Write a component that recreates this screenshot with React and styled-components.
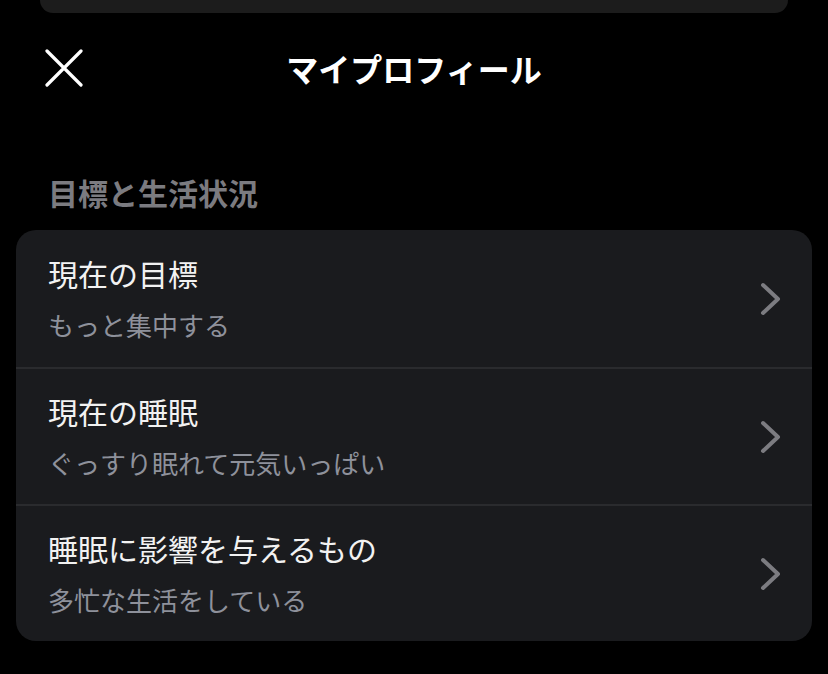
import React from 'react';
import styled, { createGlobalStyle } from 'styled-components';

const GlobalStyle = createGlobalStyle`
  html, body {
    margin: 0;
    padding: 0;
    background: #000;
  }
  body {
    font-family: "Noto Sans CJK JP", "Noto Sans", sans-serif;
    -webkit-font-smoothing: antialiased;
  }
`;

const items = [
    { title: '現在の目標', value: 'もっと集中する' },
    { title: '現在の睡眠', value: 'ぐっすり眠れて元気いっぱい' },
    { title: '睡眠に影響を与えるもの', value: '多忙な生活をしている' },
];

export default function App() {
    return (
        <Page>
            <GlobalStyle />
            <SheetPeek />
            <Header>
                <CloseButton aria-label="閉じる">
                    <svg width="38" height="38" viewBox="0 0 38 38" fill="none">
                        <path d="M2 2 L36 36 M36 2 L2 36" stroke="#fff" strokeWidth="3.2" strokeLinecap="round" />
                    </svg>
                </CloseButton>
                <Title>マイプロフィール</Title>
            </Header>
            <SectionLabel>目標と生活状況</SectionLabel>
            <Card>
                {items.map((item) => (
                    <Row key={item.title}>
                        <RowText>
                            <RowTitle>{item.title}</RowTitle>
                            <RowValue>{item.value}</RowValue>
                        </RowText>
                        <svg width="22" height="34" viewBox="0 0 22 34" fill="none">
                            <path d="M3 3 L18 17 L3 31" stroke="#7c7c81" strokeWidth="4" strokeLinecap="round" strokeLinejoin="round" />
                        </svg>
                    </Row>
                ))}
            </Card>
        </Page>
    );
}

const Page = styled.div`
  width: 828px;
  height: 674px;
  background: #000;
  overflow: hidden;
  display: flex;
  flex-direction: column;
`;

const SheetPeek = styled.div`
  height: 13px;
  margin: 0 40px;
  background: #1c1c1c;
  border-radius: 0 0 14px 14px;
`;

const Header = styled.div`
  position: relative;
  height: 112px;
  display: flex;
  align-items: center;
  justify-content: center;
`;

const CloseButton = styled.button`
  position: absolute;
  left: 45px;
  top: 36px;
  padding: 0;
  border: 0;
  background: none;
  display: flex;
  cursor: pointer;
`;

const Title = styled.h1`
  margin: 0;
  margin-top: -3px;
  color: #fff;
  font-size: 32px;
  font-weight: 700;
  letter-spacing: 0;
`;

const SectionLabel = styled.h2`
  margin: 47px 0 0 48px;
  color: #7b7b80;
  font-size: 30px;
  font-weight: 700;
  line-height: 40px;
`;

const Card = styled.div`
  margin: 18px 16px 0;
  background: #1a1b1e;
  border-radius: 20px;
  overflow: hidden;
`;

const Row = styled.div`
  height: 137px;
  display: flex;
  align-items: center;
  justify-content: space-between;
  padding: 0 30px 3px 32px;
  box-sizing: border-box;
  & + & {
    border-top: 2px solid #2a2b2e;
  }
  svg {
    margin-top: 3px;
  }
`;

const RowText = styled.div`
  display: flex;
  flex-direction: column;
  gap: 15px;
`;

const RowTitle = styled.div`
  color: #f2f2f2;
  font-size: 30px;
  line-height: 40px;
`;

const RowValue = styled.div`
  color: #8e919b;
  font-size: 26px;
  line-height: 34px;
`;
